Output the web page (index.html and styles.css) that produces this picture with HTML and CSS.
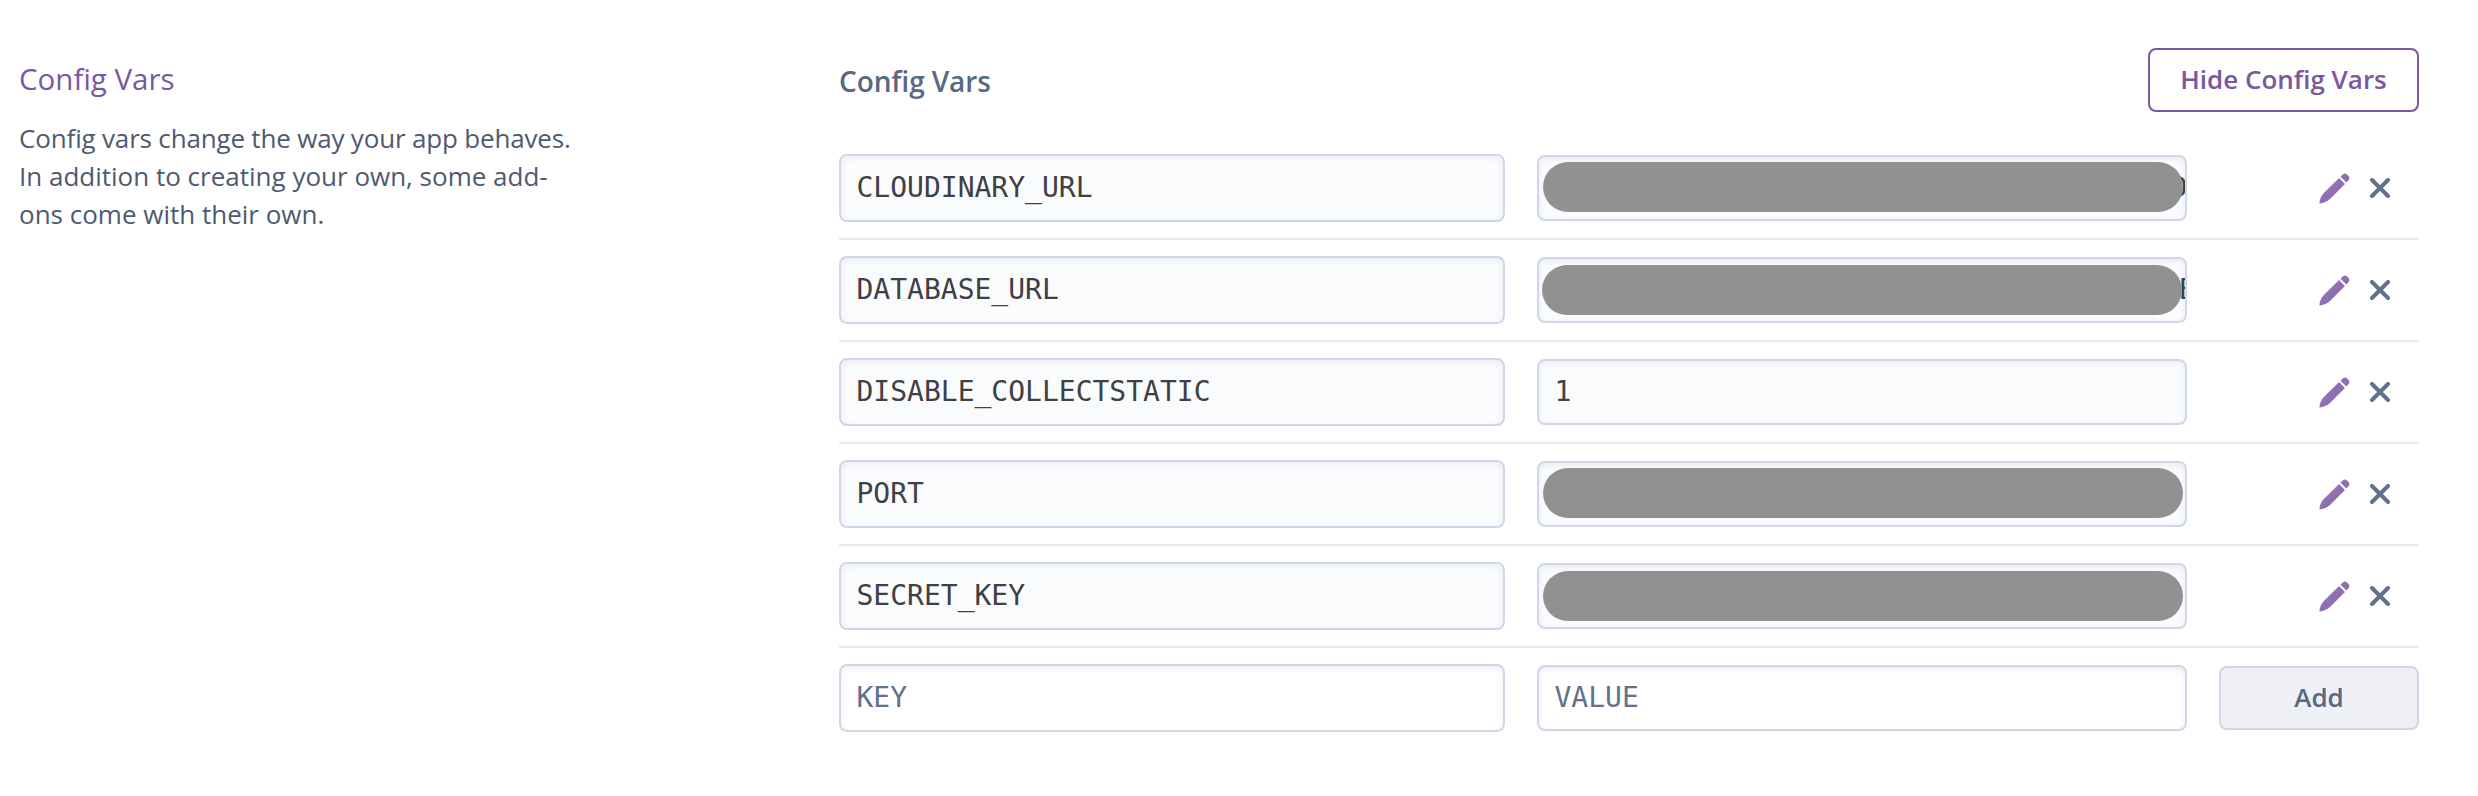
FILE: index.html
```html
<!DOCTYPE html>
<html lang="en">
<head>
<meta charset="utf-8">
<title>Config Vars</title>
<link rel="stylesheet" href="styles.css">
</head>
<body>
<svg class="defs" width="0" height="0" aria-hidden="true">
  <defs>
    <linearGradient id="purple" x1="0" y1="0" x2="1" y2="1">
      <stop offset="0" stop-color="#9d7fbd"/><stop offset="1" stop-color="#8260a6"/>
    </linearGradient>
    <symbol id="pencil" viewBox="0 0 32 32">
      <path fill="url(#purple)" d="M20.7 5.2 26.800 11.300 11.600 26.500C8.300 29.500 4.800 30.800.4 31.400.8 27 2 23.600 5 20.700ZM22.200 3.800 24.400 1.600Q26.700-.5 29.300 1.900L30 2.600Q32.500 5.200 30.400 7.600L28.200 9.900Z"/>
    </symbol>
    <symbol id="cross" viewBox="0 0 20 20">
      <path fill="none" stroke="#62718c" stroke-width="4" stroke-linecap="round" d="M2 2 18 18M18 2 2 18"/>
    </symbol>
  </defs>
</svg>
<main class="page">
  <aside class="intro">
    <h2 class="intro-title">Config Vars</h2>
    <p class="intro-text"><span class="tight">Config vars change the way your app behaves.</span><br>In addition to creating your own, some add-<br>ons come with their own.</p>
  </aside>
  <section class="vars">
    <header class="vars-head">
      <h3 class="vars-title">Config Vars</h3>
      <button class="btn btn-hide"><span class="hide-label">Hide Config Vars</span></button>
    </header>
    <div class="row">
      <div class="field key">CLOUDINARY_URL</div>
      <div class="field value"><span class="tail">D</span><span class="mask"></span></div>
      <div class="actions"><svg class="pencil"><use href="#pencil"/></svg><svg class="cross"><use href="#cross"/></svg></div>
    </div>
    <div class="row">
      <div class="field key">DATABASE_URL</div>
      <div class="field value"><span class="tail tail-cut">E</span><span class="mask mask-left mask-low"></span></div>
      <div class="actions"><svg class="pencil"><use href="#pencil"/></svg><svg class="cross"><use href="#cross"/></svg></div>
    </div>
    <div class="row">
      <div class="field key">DISABLE_COLLECTSTATIC</div>
      <div class="field value">1</div>
      <div class="actions"><svg class="pencil"><use href="#pencil"/></svg><svg class="cross"><use href="#cross"/></svg></div>
    </div>
    <div class="row">
      <div class="field key">PORT</div>
      <div class="field value"><span class="mask"></span></div>
      <div class="actions"><svg class="pencil"><use href="#pencil"/></svg><svg class="cross"><use href="#cross"/></svg></div>
    </div>
    <div class="row">
      <div class="field key">SECRET_KEY</div>
      <div class="field value"><span class="mask mask-low"></span></div>
      <div class="actions"><svg class="pencil"><use href="#pencil"/></svg><svg class="cross"><use href="#cross"/></svg></div>
    </div>
    <div class="row row-new">
      <div class="field key empty">KEY</div>
      <div class="field value empty">VALUE</div>
      <button class="btn btn-add"><span class="add-label">Add</span></button>
    </div>
  </section>
</main>
</body>
</html>
```

FILE: styles.css
```css
* { box-sizing: border-box; }
body {
  margin: 0;
  background: #fff;
  font-family: "Open Sans", "Noto Sans", sans-serif;
  font-feature-settings: "liga" 1;
}
h2, h3, p { margin: 0; }
.defs { position: absolute; }
.page {
  display: grid;
  grid-template-columns: 820px 1580px;
  padding: 48px 0 0 19px;
}
.intro { padding-top: 11px; }
.intro-title {
  font-size: 29.5px;
  font-weight: 400;
  line-height: 40px;
  color: #79589f;
}
.intro-text {
  margin-top: 20px;
  font-size: 26px;
  line-height: 38px;
  color: #4e5a70;
  white-space: nowrap;
}
.tight { letter-spacing: -0.18px; }
.vars-head {
  display: flex;
  justify-content: space-between;
  height: 106px;
}
.vars-title {
  padding-top: 13px;
  font-size: 28px;
  font-weight: 600;
  line-height: 40px;
  letter-spacing: -0.1px;
  color: #596981;
}
.btn {
  height: 64px;
  padding: 0;
  border: 2px solid #cfd7e6;
  border-radius: 8px;
  font: 600 26px/54px "Open Sans", "Noto Sans", sans-serif;
  white-space: nowrap;
}
.btn-hide {
  width: 271px;
  padding-bottom: 3px;
  border-color: #79589f;
  background: #fff;
  color: #79589f;
}
.btn-add {
  padding-bottom: 3px;
  background: #eff0f6;
  color: #596981;
}
.row {
  display: grid;
  grid-template-columns: 666px 650px 200px;
  column-gap: 32px;
  align-items: center;
  height: 102px;
  padding: 16px 0;
  border-bottom: 2px solid #e6eaf0;
}
.vars-head + .row { height: 86px; padding-top: 0; }
.row-new { height: 100px; border-bottom: 0; }
.field {
  position: relative;
  overflow: hidden;
  padding: 0 15.5px;
  border: 2px solid #cfd7e6;
  border-radius: 8px;
  background: #fafbfd;
  box-shadow: inset 0 2px 6px #e8ebf3;
  font: 28px/62px "DejaVu Sans Mono", monospace;
  color: #3f3f44;
}
.key { height: 68px; line-height: 63px; }
.value { height: 66px; }
.empty { background: #fff; color: #62718c; }
.tail { display: block; margin: 0 -18px; text-align: right; }
.tail-cut { margin-right: -26px; }
.mask {
  position: absolute;
  top: 5px;
  left: 4px;
  width: 640px;
  height: 50px;
  border-radius: 25px;
  background: #919191;
}
.mask-low { top: 6px; }
.mask-left { left: 3px; }
.actions {
  display: flex;
  align-items: center;
  gap: 20px;
  padding-left: 100px;
}
.pencil { width: 31px; height: 31px; }
.cross { width: 20px; height: 20px; }
```
